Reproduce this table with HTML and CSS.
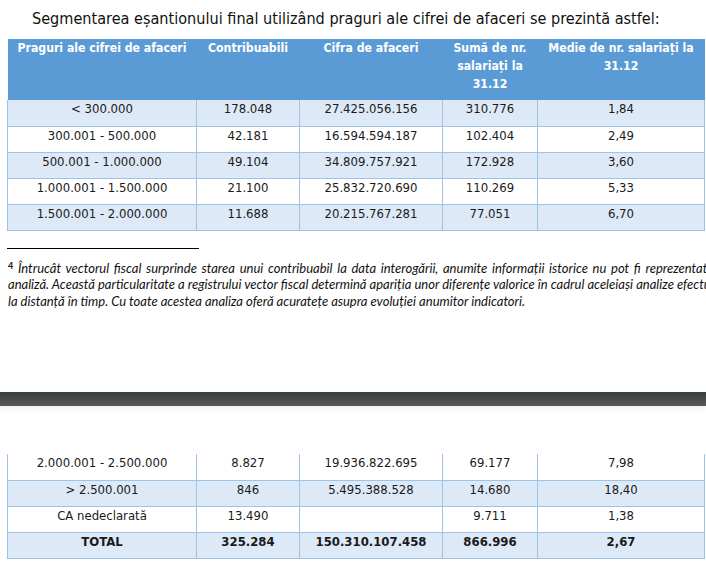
FILE: index.html
```html
<!DOCTYPE html>
<html lang="ro">
<head>
<meta charset="utf-8">
<title>Segmentarea eșantionului</title>
<link rel="stylesheet" href="styles.css">
</head>
<body>
<div class="page page-top">
  <p class="title">Segmentarea eșantionului final utilizând praguri ale cifrei de afaceri se prezintă astfel:</p>
  <table class="data">
    <colgroup>
      <col class="c1"><col class="c2"><col class="c3"><col class="c4"><col class="c5">
    </colgroup>
    <thead>
      <tr>
        <th>Praguri ale cifrei de afaceri</th>
        <th>Contribuabili</th>
        <th>Cifra de afaceri</th>
        <th>Sumă de nr. salariați la 31.12</th>
        <th>Medie de nr. salariați la 31.12</th>
      </tr>
    </thead>
    <tbody>
      <tr class="alt"><td>&lt; 300.000</td><td>178.048</td><td>27.425.056.156</td><td>310.776</td><td>1,84</td></tr>
      <tr><td>300.001 - 500.000</td><td>42.181</td><td>16.594.594.187</td><td>102.404</td><td>2,49</td></tr>
      <tr class="alt"><td>500.001 - 1.000.000</td><td>49.104</td><td>34.809.757.921</td><td>172.928</td><td>3,60</td></tr>
      <tr><td>1.000.001 - 1.500.000</td><td>21.100</td><td>25.832.720.690</td><td>110.269</td><td>5,33</td></tr>
      <tr class="alt"><td>1.500.001 - 2.000.000</td><td>11.688</td><td>20.215.767.281</td><td>77.051</td><td>6,70</td></tr>
    </tbody>
  </table>
  <div class="footnote">
    <div class="rule"></div>
    <p class="fn-line fn-first"><sup>4</sup> Întrucât vectorul fiscal surprinde starea unui contribuabil la data interogării, anumite informații istorice nu pot fi reprezentate în</p>
    <p class="fn-line">analiză. Această particularitate a registrului vector fiscal determină apariția unor diferențe valorice în cadrul aceleiași analize efectuate</p>
    <p class="fn-line fn-last">la distanță în timp. Cu toate acestea analiza oferă acuratețe asupra evoluției anumitor indicatori.</p>
  </div>
</div>
<div class="page-gap"></div>
<div class="page page-bottom">
  <table class="data">
    <colgroup>
      <col class="c1"><col class="c2"><col class="c3"><col class="c4"><col class="c5">
    </colgroup>
    <tbody>
      <tr><td>2.000.001 - 2.500.000</td><td>8.827</td><td>19.936.822.695</td><td>69.177</td><td>7,98</td></tr>
      <tr class="alt"><td>&gt; 2.500.001</td><td>846</td><td>5.495.388.528</td><td>14.680</td><td>18,40</td></tr>
      <tr><td>CA nedeclarată</td><td>13.490</td><td></td><td>9.711</td><td>1,38</td></tr>
      <tr class="alt total"><td>TOTAL</td><td>325.284</td><td>150.310.107.458</td><td>866.996</td><td>2,67</td></tr>
    </tbody>
  </table>
</div>
</body>
</html>
```

FILE: styles.css
```css
html, body {
  margin: 0;
  padding: 0;
  background: #ffffff;
  overflow: hidden;
  width: 706px;
  height: 561px;
}

body {
  font-family: "DejaVu Sans Condensed", "DejaVu Sans", sans-serif;
  font-stretch: condensed;
  color: #1a1a1a;
}

.page-top {
  height: 392px;
}

.title {
  margin: 0;
  padding: 8px 0 0 32px;
  height: 31px;
  font-size: 16.1px;
  line-height: 21px;
  color: #111;
  white-space: nowrap;
}

.data {
  margin-left: 7px;
  width: 697px;
  border-collapse: collapse;
  table-layout: fixed;
  font-size: 13px;
}

.c1 { width: 189px; }
.c2 { width: 103px; }
.c3 { width: 143px; }
.c4 { width: 95px; }
.c5 { width: 167px; }

.data th {
  background: #5b9bd5;
  color: #ffffff;
  font-weight: bold;
  font-size: 12.2px;
  text-align: center;
  vertical-align: top;
  height: 61px;
  padding: 0 4px;
  line-height: 18px;
  box-sizing: border-box;
}

.data td {
  text-align: center;
  vertical-align: top;
  height: 26px;
  padding: 0 4px;
  line-height: 17px;
  border: 1px solid #9dc3e6;
  box-sizing: border-box;
  white-space: nowrap;
}

.data tbody tr:first-child td {
  border-top: none;
}

.data tr.alt td {
  background: #dde9f6;
}

.data tr.total td {
  font-weight: bold;
}

.footnote {
  margin-top: 17px;
  width: 728px;
}

.rule {
  margin-left: 7px;
  width: 192px;
  height: 1px;
  background: #000;
  margin-bottom: 11px;
}

.fn-line {
  margin: 0;
  padding-left: 8px;
  font-family: "Lato", "Liberation Sans", sans-serif;
  font-stretch: normal;
  font-style: italic;
  font-size: 13px;
  line-height: 16.5px;
  color: #111;
  text-align: justify;
  text-align-last: justify;
  white-space: nowrap;
}

.fn-last {
  text-align-last: left;
}

.fn-line sup {
  font-size: 9px;
  font-weight: bold;
  font-style: normal;
  vertical-align: 4px;
  line-height: 0;
}

.page-gap {
  height: 14px;
  background: linear-gradient(#3a3d3e, #565a5b);
  box-shadow: 0 4px 5px rgba(0, 0, 0, 0.05);
}

.page-bottom {
  padding-top: 48px;
}
```
